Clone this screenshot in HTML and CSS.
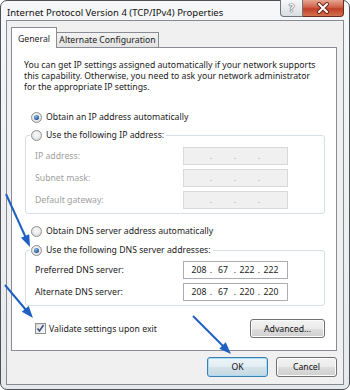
FILE: index.html
```html
<!DOCTYPE html>
<html lang="en">
<head>
    <meta charset="UTF-8">
    <meta name="viewport" content="width=device-width, initial-scale=1.0">
    <title>Internet Protocol Version 4 (TCP/IPv4) Properties</title>
    <link rel="stylesheet" href="styles.css">
</head>
<body>

    <div class="window">
        <div class="titlebar">
            <span class="title">Internet Protocol Version 4 (TCP/IPv4) Properties</span>
            <div class="caption-buttons">
                <span class="btn-help">?</span>
                <span class="btn-close">
                    <svg width="40" height="16" viewBox="0 0 40 16">
                        <path d="M16 4 L24 12 M24 4 L16 12" stroke="#6e2618" stroke-width="4" stroke-linecap="round"/>
                        <path d="M16 4 L24 12 M24 4 L16 12" stroke="#fff" stroke-width="2" stroke-linecap="round"/>
                    </svg>
                </span>
            </div>
        </div>

        <div class="client">
            <div class="tabs">
                <span class="tab active">General</span>
                <span class="tab">Alternate Configuration</span>
            </div>

            <div class="panel">
                <p class="intro">You can get IP settings assigned automatically if your network supports<br>this capability. Otherwise, you need to ask your network administrator<br>for the appropriate IP settings.</p>

                <div class="option first"><span class="radio checked"></span>Obtain an IP address automatically</div>

                <fieldset class="group disabled">
                    <legend><span class="radio"></span>Use the following IP address:</legend>
                    <div class="row">
                        <span>IP address:</span>
                        <span class="ip"><span></span><i>.</i><span></span><i>.</i><span></span><i>.</i><span></span></span>
                    </div>
                    <div class="row">
                        <span>Subnet mask:</span>
                        <span class="ip"><span></span><i>.</i><span></span><i>.</i><span></span><i>.</i><span></span></span>
                    </div>
                    <div class="row">
                        <span>Default gateway:</span>
                        <span class="ip"><span></span><i>.</i><span></span><i>.</i><span></span><i>.</i><span></span></span>
                    </div>
                </fieldset>

                <div class="option dns"><span class="radio"></span>Obtain DNS server address automatically</div>

                <fieldset class="group">
                    <legend><span class="radio checked"></span>Use the following DNS server addresses:</legend>
                    <div class="row">
                        <span>Preferred DNS server:</span>
                        <span class="ip"><span>208</span><i>.</i><span>67</span><i>.</i><span>222</span><i>.</i><span>222</span></span>
                    </div>
                    <div class="row">
                        <span>Alternate DNS server:</span>
                        <span class="ip"><span>208</span><i>.</i><span>67</span><i>.</i><span>220</span><i>.</i><span>220</span></span>
                    </div>
                </fieldset>

                <div class="bottom-row">
                    <label class="check">
                        <span class="checkbox">
                            <svg width="9" height="9" viewBox="0 0 9 9"><path d="M1.5 4.5 L3.5 7 L7.5 1" fill="none" stroke="#3f5683" stroke-width="1.6"/></svg>
                        </span>
                        Validate settings upon exit
                    </label>
                    <button class="btn advanced">Advanced...</button>
                </div>
            </div>

            <div class="footer">
                <button class="btn default">OK</button>
                <button class="btn">Cancel</button>
            </div>
        </div>

        <!-- annotation arrows drawn over the dialog -->
        <svg class="arrows" width="350" height="390" viewBox="0 0 350 390">
            <g stroke="#1f5fc2" stroke-width="2" fill="#1f5fc2">
                <line x1="6" y1="194" x2="26" y2="238"/>
                <polygon points="30,247 21,237.8 29.2,234.2" stroke="none"/>
                <line x1="5" y1="285" x2="26" y2="310"/>
                <polygon points="33,318 21.8,311.8 28.7,306" stroke="none"/>
                <line x1="193" y1="316" x2="223" y2="346"/>
                <polygon points="231,354 219.3,348.7 225.7,342.3" stroke="none"/>
            </g>
        </svg>
    </div>

</body>
</html>
```

FILE: styles.css
```css
body {
    margin: 0;
    font-family: "Noto Sans", sans-serif;
    font-size: 8.7px;
    color: #1b1b1b;
    background: #fff;
}
.window {
    position: relative;
    width: 350px;
    height: 390px;
    box-sizing: border-box;
    border: 1px solid #4e5257;
    border-radius: 7px;
    background: linear-gradient(#f6f7f9, #e6e9ec);
    padding: 0 5px 4px 5px;
    display: flex;
    flex-direction: column;
}
.titlebar {
    height: 19px;
    display: flex;
    align-items: flex-start;
}
.title {
    font-size: 9.5px;
    line-height: 12px;
    padding: 6px 0 0 1px;
    color: #111;
}
.caption-buttons {
    margin-left: auto;
    margin-top: -1px;
    display: flex;
}
.btn-help {
    width: 21px;
    height: 16px;
    border: 1px solid #6f747b;
    border-top: none;
    border-radius: 0 0 0 4px;
    background: linear-gradient(#f6f7f8, #dadde1);
    color: #fff;
    font-size: 11px;
    font-weight: bold;
    line-height: 16px;
    text-align: center;
    text-shadow: 0 0 1px #4f555c, 0 0 1px #4f555c, 0 0 1px #4f555c;
}
.btn-close {
    width: 40px;
    height: 16px;
    border: 1px solid #6a2a1f;
    border-top: none;
    border-left: none;
    border-radius: 0 0 4px 0;
    background: linear-gradient(#e6a692, #d0604a 45%, #c13f25 55%, #d2714f);
}
.btn-close svg {
    display: block;
}
.client {
    flex: 1;
    border: 1px solid #878b91;
    background: #f0f0f0;
    padding: 7px 6px 0 4px;
}
.tabs {
    display: flex;
    align-items: flex-end;
    height: 20px;
    margin-bottom: -1px;
    position: relative;
}
.tab {
    height: 14px;
    width: 101px;
    margin-bottom: 1px;
    border: 1px solid #898c95;
    border-bottom: none;
    border-left: none;
    background: linear-gradient(#f2f2f2, #e3e3e3);
    line-height: 15px;
    text-align: center;
}
.tab.active {
    height: 20px;
    width: 44px;
    margin-bottom: 0;
    border-left: 1px solid #898c95;
    background: #fff;
    line-height: 23px;
    position: relative;
    z-index: 1;
}
.panel {
    height: 302px;
    border: 1px solid #898c95;
    background: #fff;
    padding: 0 11px 0 13px;
}
.intro {
    margin: 12px 0 0 -1px;
    line-height: 11px;
    white-space: nowrap;
}
.option {
    display: flex;
    align-items: center;
    height: 14px;
    padding-left: 6px;
}
.option.first {
    margin-top: 17px;
}
.option.dns {
    margin-top: 10px;
}
.radio {
    width: 9px;
    height: 9px;
    border: 1px solid #8d8f91;
    border-radius: 50%;
    background: radial-gradient(circle at 50% 40%, #fdfdfd, #d6d7d8);
    margin-right: 4px;
    display: inline-flex;
    align-items: center;
    justify-content: center;
    flex-shrink: 0;
}
.radio.checked::after {
    content: "";
    width: 5px;
    height: 5px;
    border-radius: 50%;
    background: radial-gradient(circle at 40% 35%, #8cc2ee, #1d4f8c 70%);
}
.group {
    margin: 4px 0 0 0;
    padding: 5px 36px 4px 9px;
    border: 1px solid #d5dfe5;
    border-radius: 3px;
    min-width: 0;
}
.option.dns + .group {
    margin-top: 5px;
    padding-top: 4px;
}
.group legend {
    display: flex;
    align-items: center;
    height: 14px;
    padding: 0 2px 0 1px;
    margin-left: -5px;
}
.row {
    display: grid;
    grid-template-columns: 148px 105px;
    align-items: center;
    height: 18px;
    margin-bottom: 4px;
}
.row:last-child {
    margin-bottom: 0;
}
.ip {
    height: 16px;
    border: 1px solid #abadb3;
    display: flex;
    align-items: center;
    padding-left: 6px;
    box-sizing: content-box;
    width: 97px;
}
.ip span {
    width: 18px;
    text-align: center;
}
.ip i {
    font-style: normal;
    width: 6px;
    text-align: center;
}
.disabled .row {
    color: #a0a0a0;
}
.disabled .ip {
    background: #f0f0f0;
    border-color: #d9d9d9;
}
.bottom-row {
    display: flex;
    justify-content: space-between;
    align-items: center;
    height: 19px;
    margin-top: 13px;
    padding-left: 10px;
    width: 290px;
}
.check {
    display: flex;
    align-items: center;
}
.checkbox {
    width: 9px;
    height: 9px;
    border: 1px solid #8e8f8f;
    background: linear-gradient(135deg, #dcdcdc, #fbfbfb);
    margin-right: 3px;
    display: flex;
    align-items: center;
    justify-content: center;
}
.checkbox svg {
    display: block;
}
.btn {
    height: 20px;
    padding: 0;
    border: 1px solid #707070;
    border-radius: 3px;
    background: linear-gradient(#f2f2f2, #ebebeb 50%, #dddddd 51%, #cfcfcf);
    font-family: "Noto Sans", sans-serif;
    font-size: 8.7px;
    color: #111;
    box-shadow: inset 0 0 0 1px #fcfcfc;
}
.btn.advanced {
    width: 75px;
    height: 19px;
}
.footer {
    display: flex;
    justify-content: flex-end;
    gap: 8px;
    margin-top: 6px;
}
.footer .btn {
    width: 61px;
}
.btn.default {
    border-color: #3c7fb1;
    box-shadow: inset 0 0 0 1px #a8dcf5;
    background: linear-gradient(#eef5f9, #e2edf3 50%, #d3e2ea 51%, #c7d8e2);
}
.arrows {
    position: absolute;
    top: -1px;
    left: -1px;
    pointer-events: none;
}
```
